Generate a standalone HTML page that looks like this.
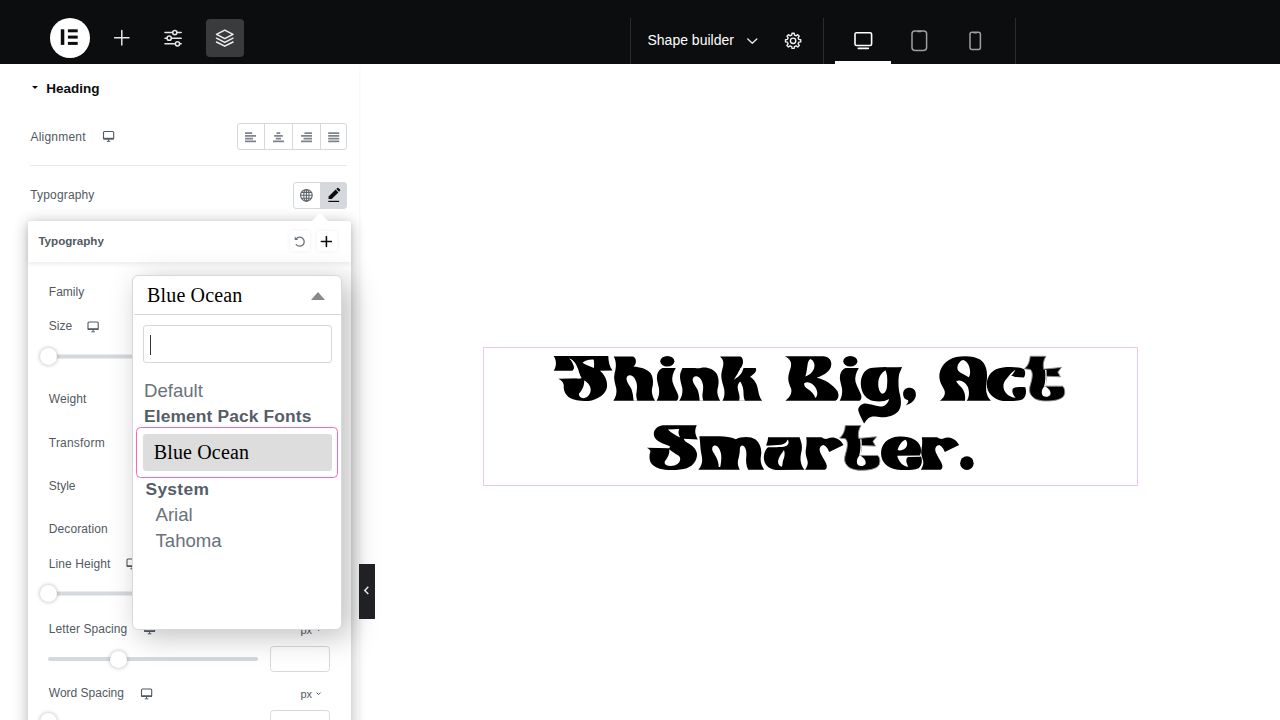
<!DOCTYPE html>
<html><head><meta charset="utf-8">
<style>
*{box-sizing:border-box;margin:0;padding:0}
html,body{width:1280px;height:720px;overflow:hidden;background:#fff;font-family:"Liberation Sans",sans-serif;}
.abs{position:absolute}
#top{left:0;top:0;width:1280px;height:64px;background:#0c0d0e}
.lbl{position:absolute;font-size:12px;color:#515962;line-height:14px;white-space:nowrap}
#panel{left:0;top:64px;width:359px;height:656px;background:#fff;box-shadow:0 0 4px rgba(0,0,0,.05)}
.vsep{position:absolute;top:18px;width:1px;height:46px;background:#2a2c2f}
.knob{position:absolute;width:17px;height:17px;border-radius:50%;background:#fff;box-shadow:0 0 4px rgba(0,0,0,.3)}
.dd{color:#69727d;line-height:22px;white-space:nowrap}
</style></head><body>
<!-- canvas -->
<div class="abs" id="canvas" style="left:359px;top:64px;width:921px;height:656px;background:#fff"></div>
<!-- heading widget -->
<div class="abs" style="left:483px;top:347px;width:655px;height:139px;border:1px solid #eec6ee"></div>
<svg class="abs" id="hsvg" style="left:484px;top:348px" width="654" height="137" viewBox="484 348 654 137"><g transform="translate(550.00,350.00) scale(0.08333)"><path d="M45,72 L700,72 C700,140 715,200 750,245 L600,248 C640,280 690,350 685,430 C680,510 620,570 500,605 C420,620 300,610 240,575 C180,540 160,480 165,420 C160,390 140,365 100,345 L370,340 C355,290 330,220 300,180 C290,215 285,235 268,250 L45,250 C75,200 85,140 45,72Z" fill="#000"/><path d="M390,153 C425,122 480,112 524,116 C532,150 530,185 527,215 C480,198 425,175 390,153Z" fill="#fff"/><path d="M410,365 C460,390 495,440 488,490 C480,545 440,580 395,578 C360,572 340,545 350,520 C375,490 415,440 410,365Z" fill="#fff"/><path d="M230,103 C286,118 318,172 338,232 C350,278 362,310 380,340 L326,343 C310,300 296,250 288,206 C280,166 260,130 230,103Z" fill="#fff"/></g><g transform="translate(605.00,350.00) scale(0.08333)"><path d="M105,78 L330,78 C365,85 375,120 370,150 C365,175 352,190 340,198 C420,205 500,225 545,275 C580,320 585,400 565,460 C555,510 575,570 600,608 L100,608 C130,570 145,520 135,460 C120,400 100,340 115,280 C135,220 140,140 105,78Z" fill="#000"/><path d="M300,303 C337,303 372,350 382,410 C388,450 380,500 375,530 C374,560 382,590 388,608 L343,608 C340,560 332,510 318,470 C300,430 262,390 258,350 C256,322 276,303 300,303Z" fill="#fff"/></g><g transform="translate(605.00,350.00) scale(0.08333)"><path d="M663,135 a85,62 0 1,0 170,0 a85,62 0 1,0 -170,0Z" fill="#000"/><path d="M690,215 L850,215 C815,270 800,330 810,380 C825,440 870,500 880,550 C885,580 875,600 860,608 L620,608 C645,570 655,520 648,460 C635,400 615,350 625,300 C635,255 660,228 690,215Z" fill="#000"/></g><g transform="translate(670.00,350.00) scale(0.08333)"><path d="M150,215 L300,215 C330,222 345,222 370,215 C440,200 520,225 560,285 C590,340 588,410 570,470 C560,520 580,570 602,608 L110,608 C140,570 155,520 148,460 C135,400 112,340 122,290 C130,255 140,235 150,215Z" fill="#000"/><path d="M315,316 C352,316 386,362 396,420 C402,458 394,505 389,535 C388,565 394,590 400,608 L356,608 C353,562 345,515 331,477 C314,438 276,400 272,362 C270,335 290,316 315,316Z" fill="#fff"/></g><g transform="translate(670.00,350.00) scale(0.08333)"><path d="M600,78 L840,78 C870,85 880,120 875,160 C865,200 840,240 815,280 C840,260 865,240 880,215 L1030,215 C1040,240 1030,265 1000,290 C985,305 970,315 960,322 C1010,350 1045,410 1055,470 C1062,520 1075,570 1105,608 L630,608 C655,565 658,520 650,470 C640,420 615,370 615,310 C615,250 645,200 640,150 C638,120 620,95 600,78Z" fill="#000"/><path d="M848,213 L882,213 C874,262 842,314 766,356 C800,305 830,255 848,213Z" fill="#fff"/><path d="M842,378 C820,400 805,430 815,475 C825,520 845,560 830,608 L900,608 C878,570 885,520 880,480 C875,440 860,405 842,378Z" fill="#fff"/></g><g transform="translate(775.00,345.00) scale(0.10417)"><path d="M95,108 L470,108 C520,115 545,150 540,195 C535,250 470,290 400,315 C480,330 560,385 600,445 C620,490 605,525 580,535 L100,535 C145,500 165,460 155,420 C140,380 120,340 130,290 C140,240 165,200 150,160 C140,135 120,120 95,108Z" fill="#000"/><path d="M340,134 C374,148 388,190 374,228 C358,268 326,290 292,302 C306,252 308,212 314,180 C318,158 328,142 340,134Z" fill="#fff"/><path d="M280,366 C320,346 364,368 390,410 C410,446 414,484 388,508 C374,472 350,444 318,424 C292,408 276,390 280,366Z" fill="#fff"/></g><g transform="translate(850.00,350.00) scale(0.10417)"><path d="M500,163 L472,230 C460,300 466,380 480,430 C496,500 492,560 460,592 C420,632 350,648 300,645 C260,642 230,632 200,642 C170,652 150,680 135,706 C120,670 92,625 80,582 C74,552 100,525 130,515 C170,505 230,535 290,542 C330,545 362,520 376,470 C340,492 280,500 230,490 C160,475 108,420 104,330 C100,250 140,185 200,172 C250,163 400,168 500,163Z" fill="#000"/><path d="M510,420 C510,380 540,360 575,362 C615,365 637,395 632,440 C626,482 590,516 535,532 C556,510 566,490 556,480 C525,476 510,450 510,420Z" fill="#000"/><path d="M340,195 C362,240 360,300 355,350 C350,400 325,425 305,418 C280,405 268,350 272,305 C278,255 305,215 340,195Z" fill="#fff"/></g><g transform="translate(930.00,345.00) scale(0.10417)"><path d="M95,535 C130,510 150,480 140,440 C125,400 95,370 90,310 C85,220 150,140 250,115 C330,100 430,105 480,140 C540,180 555,260 545,340 C535,420 530,475 585,535Z" fill="#000"/><path d="M320,145 C360,160 385,210 385,260 C385,285 380,300 372,310 C340,290 300,275 278,255 C255,230 260,190 285,165 C295,152 308,145 320,145Z" fill="#fff"/><path d="M252,346 C292,328 336,350 362,400 C384,452 374,512 350,537 L336,537 C344,482 326,432 298,404 C278,384 258,368 252,346Z" fill="#fff"/></g><g transform="translate(930.00,345.00) scale(0.10417)"><path d="M545,380 C545,290 600,225 700,215 C780,208 850,212 900,230 C918,250 918,290 900,312 L820,306 C800,300 785,298 772,296 C735,320 705,350 705,395 C705,440 740,480 780,497 C800,505 812,506 822,505 C790,475 785,440 795,420 C820,402 870,400 915,405 C930,450 920,500 890,520 C850,540 760,540 700,537 C610,525 545,460 545,380Z" fill="#000"/><path d="M820,238 C798,252 762,284 730,334 L774,300 C794,286 810,262 820,238Z" fill="#fff"/></g><g transform="translate(1000.00,345.00) scale(0.10417)"><path d="M290,108 L440,108 C415,150 410,200 420,232 L590,215 L555,260 L580,305 L445,300 C445,340 440,370 430,395 L600,395 C625,410 628,470 610,492 C580,527 520,537 440,537 C360,537 300,510 285,450 C275,400 310,350 310,290 C310,260 300,240 290,235 L235,228 C270,200 285,160 290,108Z" fill="#000" stroke="#8a8a8a" stroke-width="9"/><path d="M425,395 C455,400 490,440 485,470 C480,495 440,505 415,490 C395,470 395,430 425,395Z" fill="#fff"/><path d="M432,240 L446,240 C450,300 446,350 436,396 L424,396 C436,350 440,300 432,240Z" fill="#fff"/></g><g transform="translate(640.00,415.00) scale(0.10417)"><path d="M545,98 L220,98 C160,105 122,150 135,200 C145,250 220,275 290,302 L280,318 L65,315 C85,325 100,335 100,350 C88,380 88,420 100,450 C120,490 170,515 240,525 C320,532 400,525 450,510 C510,490 545,440 548,380 C545,330 500,290 450,265 C435,255 425,240 420,228 L555,235 C530,190 520,150 545,98Z" fill="#000"/><path d="M268,140 L376,135 C366,160 366,188 386,216 C345,198 300,175 268,140Z" fill="#fff"/><path d="M282,328 C300,345 335,368 368,388 C392,405 390,430 375,455 C350,485 300,495 260,485 C235,475 230,455 242,440 C265,410 285,375 282,328Z" fill="#fff"/></g><g transform="translate(690.00,415.00) scale(0.10417)"><path d="M90,205 L250,205 C300,200 380,205 440,232 C490,205 580,200 630,235 C680,280 692,340 680,400 C672,450 688,490 712,525 L80,525 C110,490 125,450 112,390 C97,330 100,260 90,205Z" fill="#000"/><path d="M232,293 C265,285 295,330 300,390 C303,430 296,470 290,500 L276,500 C275,440 250,400 225,360 C205,330 212,302 232,293Z" fill="#fff"/><path d="M505,292 C530,300 546,340 541,390 C536,440 536,480 560,527 L478,527 C465,500 455,470 460,440 C470,400 480,360 478,330 C478,305 490,290 505,292Z" fill="#fff"/></g><g transform="translate(755.00,415.00) scale(0.10417)"><path d="M125,213 L428,213 C440,250 458,290 448,340 C438,380 432,420 442,460 C450,490 462,510 476,525 L200,527 C130,520 85,470 85,410 C85,360 105,320 135,302 L106,290 C118,265 125,240 125,213Z" fill="#000"/><path d="M278,335 C290,360 285,400 272,430 C260,460 268,480 258,497 C235,495 218,470 222,440 C228,400 255,370 278,335Z" fill="#fff"/><path d="M85,298 L250,286 C285,278 305,260 314,234 C332,262 322,290 285,303 C250,312 160,309 100,310Z" fill="#fff"/></g><g transform="translate(755.00,415.00) scale(0.10417)"><path d="M492,213 L640,213 C660,228 680,235 700,225 C740,205 810,215 850,288 L712,355 C705,335 690,305 660,288 C635,290 620,310 620,335 C625,370 650,400 672,445 C690,480 700,510 672,525 L482,525 C500,500 512,470 504,440 C494,400 480,370 488,330 C496,290 498,250 492,213Z" fill="#000"/></g><g transform="translate(830.00,415.00) scale(0.10417)"><path d="M490,370 C490,280 550,215 660,207 C760,200 850,235 870,310 C878,345 872,375 862,388 L875,400 C890,440 880,490 850,510 C800,530 720,530 650,525 C550,515 490,450 490,370Z" fill="#000"/><path d="M722,238 C745,250 747,290 727,315 C705,337 670,347 650,337 C655,300 690,250 722,238Z" fill="#fff"/><path d="M645,390 L868,388 L870,400 L748,403 C727,420 727,450 752,496 C700,490 660,450 645,390Z" fill="#fff"/></g><g transform="translate(900.00,415.00) scale(0.10417)"><path d="M577,462 a65,65 0 1,0 130,0 a65,65 0 1,0 -130,0Z" fill="#000"/></g><g transform="translate(788.00,350.00) scale(0.08333)"><path d="M663,135 a85,62 0 1,0 170,0 a85,62 0 1,0 -170,0Z" fill="#000"/><path d="M690,215 L850,215 C815,270 800,330 810,380 C825,440 870,500 880,550 C885,580 875,600 860,608 L620,608 C645,570 655,520 648,460 C635,400 615,350 625,300 C635,255 660,228 690,215Z" fill="#000"/></g><g transform="translate(815.10,414.30) scale(0.10417)"><path d="M290,108 L440,108 C415,150 410,200 420,232 L590,215 L555,260 L580,305 L445,300 C445,340 440,370 430,395 L600,395 C625,410 628,470 610,492 C580,527 520,537 440,537 C360,537 300,510 285,450 C275,400 310,350 310,290 C310,260 300,240 290,235 L235,228 C270,200 285,160 290,108Z" fill="#000" stroke="#8a8a8a" stroke-width="9"/><path d="M425,395 C455,400 490,440 485,470 C480,495 440,505 415,490 C395,470 395,430 425,395Z" fill="#fff"/><path d="M432,240 L446,240 C450,300 446,350 436,396 L424,396 C436,350 440,300 432,240Z" fill="#fff"/></g><g transform="translate(870.60,415.00) scale(0.10417)"><path d="M492,213 L640,213 C660,228 680,235 700,225 C740,205 810,215 850,288 L712,355 C705,335 690,305 660,288 C635,290 620,310 620,335 C625,370 650,400 672,445 C690,480 700,510 672,525 L482,525 C500,500 512,470 504,440 C494,400 480,370 488,330 C496,290 498,250 492,213Z" fill="#000"/></g></svg>

<!-- left panel -->
<div class="abs" id="panel"></div>
<div class="abs" style="left:31.9px;top:85.7px;width:0;height:0;border-left:3.4px solid transparent;border-right:3.4px solid transparent;border-top:3.5px solid #0c0d0e"></div>
<div class="lbl" style="left:46.3px;top:81.5px;font-weight:bold;font-size:13.5px;color:#0c0d0e">Heading</div>
<div class="lbl" style="left:30.5px;top:130.1px;letter-spacing:.2px">Alignment</div>
<div class="abs" style="left:237px;top:123px;width:110px;height:27px;border:1px solid #d5d8dc;border-radius:3px"></div>
<div class="abs" style="left:30px;top:165px;width:317px;height:1px;background:#e6e8ea"></div>
<div class="lbl" style="left:30.3px;top:188.3px;letter-spacing:.15px">Typography</div>
<div class="abs" style="left:293px;top:182px;width:54px;height:27px;border:1px solid #d5d8dc;border-radius:3px;background:linear-gradient(90deg,#fff 0 26px,#d5d8dc 26px)"></div>

<svg class="abs" style="left:0;top:64px" width="360" height="656" viewBox="0 64 360 656"><g stroke="#515962" fill="none"><rect x="103.5" y="131.5" width="10.2" height="7.4" rx="1" stroke-width="1.1"/><path d="M103.3 138.6H113.9" stroke-width="1.6"/><path d="M108.6 139.4V141M106.8 141.3H110.4" stroke-width="1"/></g><path d="M264.5 123.5V150M292.5 123.5V150M320.5 123.5V150" stroke="#d5d8dc" stroke-width="1"/><path d="M245.0 133.2H252.2M245.0 135.9H256.0M245.0 138.6H253.0M245.0 141.3H256.0" stroke="#7d848c" stroke-width="1.8" fill="none"/><path d="M276.5 133.2H280.3M274.1 135.9H282.8M275.8 138.6H281.1M273.0 141.3H284.0" stroke="#7d848c" stroke-width="1.8" fill="none"/><path d="M304.5 133.2H312.0M301.0 135.9H312.0M303.5 138.6H312.0M301.0 141.3H312.0" stroke="#7d848c" stroke-width="1.8" fill="none"/><path d="M328.2 133.2H339.2M328.2 135.9H339.2M328.2 138.6H339.2M328.2 141.3H339.2" stroke="#7d848c" stroke-width="1.8" fill="none"/><g stroke="#5d646c" stroke-width="1.1" fill="none"><circle cx="306.4" cy="195.3" r="5.8"/><ellipse cx="306.4" cy="195.3" rx="2.6" ry="5.8"/><path d="M300.6 195.3H312.2M301.4 192.4H311.4M301.4 198.2H311.4M306.4 189.5V201.1"/></g><g fill="#0c0d0e"><path d="M328.4 199.1L328.9 196.3L335.6 189.6L338.4 192.4L331.7 199.1Z"/><path d="M336.3 188.9L337.2 188Q337.8 187.5 338.4 188L340 189.6Q340.5 190.2 340 190.8L339.1 191.7Z"/><rect x="328.3" y="200.8" width="10.8" height="1.2"/></g></svg>
<!-- popover -->
<div class="abs" id="pop" style="left:27.5px;top:221px;width:323.5px;height:520px;background:#fff;border-radius:3px;box-shadow:0 2px 15px rgba(0,0,0,.30)"></div>
<div class="abs" style="left:27.5px;top:221px;width:323.5px;height:41px;background:#fff;border-radius:3px 3px 0 0;box-shadow:0 2px 5px rgba(0,0,0,.08)"></div>
<div class="lbl" style="left:38.4px;top:233.9px;font-weight:bold;font-size:11.6px;color:#515962">Typography</div>

<div class="lbl" style="left:48.8px;top:284.6px">Family</div>
<div class="lbl" style="left:48.8px;top:319.1px">Size</div>
<div class="lbl" style="left:48.8px;top:392.3px;letter-spacing:.07px">Weight</div>
<div class="lbl" style="left:48.8px;top:435.5px;letter-spacing:.2px">Transform</div>
<div class="lbl" style="left:48.8px;top:478.6px">Style</div>
<div class="lbl" style="left:48.8px;top:521.8px;letter-spacing:.1px">Decoration</div>
<div class="lbl" style="left:48.8px;top:556.5px;letter-spacing:.08px">Line Height</div>
<div class="lbl" style="left:48.8px;top:621.7px;letter-spacing:.08px">Letter Spacing</div>
<div class="lbl" style="left:48.8px;top:686.4px">Word Spacing</div>


<!-- popover controls -->
<div class="abs" style="left:289.6px;top:231.2px;width:20.4px;height:19.6px;border-radius:3px;background:#fff;box-shadow:0 0 5px rgba(0,0,0,.07)"></div>
<div class="abs" style="left:316.8px;top:231.2px;width:20.2px;height:19.6px;border-radius:3px;background:#fff;box-shadow:0 0 5px rgba(0,0,0,.07)"></div>
<svg class="abs" style="left:0;top:64px" width="360" height="656" viewBox="0 64 360 656">
 <path d="M311.5 221.5L320 212.6L328.5 221.5Z" fill="#fff"/>
 <path d="M296.25 238.8A4.5 4.5 0 1 1 296.25 244.6" stroke="#69727d" stroke-width="1.3" fill="none" stroke-linecap="round"/>
 <path d="M294.7 236.6V240.1H298.2Z" fill="#69727d"/>
 <path d="M321.4 241.5H331.4M326.4 236.5V246.5" stroke="#0c0d0e" stroke-width="1.6" fill="none" stroke-linecap="round"/>
 <g stroke="#515962" fill="none"><rect x="88.0" y="322.0" width="10.2" height="7.4" rx="1" stroke-width="1.1"/><path d="M87.8 329.1H98.4" stroke-width="1.6"/><path d="M93.1 329.9V331.5M91.3 331.8H94.9" stroke-width="1"/></g><g stroke="#515962" fill="none"><rect x="127.0" y="559.0" width="10.2" height="7.4" rx="1" stroke-width="1.1"/><path d="M126.8 566.1H137.4" stroke-width="1.6"/><path d="M132.1 566.9V568.5M130.3 568.8H133.9" stroke-width="1"/></g><g stroke="#515962" fill="none"><rect x="144.5" y="624.0" width="10.2" height="7.4" rx="1" stroke-width="1.1"/><path d="M144.3 631.1H154.9" stroke-width="1.6"/><path d="M149.6 631.9V633.5M147.8 633.8H151.4" stroke-width="1"/></g><g stroke="#515962" fill="none"><rect x="141.5" y="689.0" width="10.2" height="7.4" rx="1" stroke-width="1.1"/><path d="M141.3 696.1H151.9" stroke-width="1.6"/><path d="M146.6 696.9V698.5M144.8 698.8H148.4" stroke-width="1"/></g>
 <!-- sliders -->
 <g stroke="#d5d8dc" stroke-width="4" stroke-linecap="round"><path d="M50 356.5H140"/><path d="M50 593.5H140"/><path d="M50 659H256"/><path d="M50 724H256"/></g>
 <g fill="none" stroke="#d5d8dc" stroke-width="1"><rect x="270.5" y="646.5" width="59" height="25" rx="3"/><rect x="270.5" y="710.5" width="59" height="25" rx="3"/></g>
 <path d="M316.6 692.6L318.6 694.6L320.6 692.6" stroke="#515962" stroke-width="1" fill="none"/>
 <path d="M316.6 628.6L318.6 630.6L320.6 628.6" stroke="#515962" stroke-width="1" fill="none"/>
</svg>
<div class="knob" style="left:39.5px;top:348px"></div>
<div class="knob" style="left:39.5px;top:585px"></div>
<div class="knob" style="left:109.5px;top:650.5px"></div>
<div class="knob" style="left:39.5px;top:712.5px"></div>
<div class="lbl" style="left:300.5px;top:687px;font-size:11px">px</div>
<div class="lbl" style="left:300.5px;top:623px;font-size:11px">px</div>

<!-- dropdown -->
<div class="abs" id="dd" style="left:132px;top:275px;width:210px;height:354.5px;background:#fff;border:1px solid #d5d8dc;border-radius:6px;box-shadow:8px 6px 30px rgba(0,0,0,.26)"></div>


<div class="abs" style="left:133.5px;top:313.5px;width:207.5px;height:1px;background:#d5d8dc"></div>
<div class="abs" style="left:147px;top:282.5px;font-family:'Liberation Serif',serif;font-size:20px;line-height:24px;color:#000;letter-spacing:.16px;white-space:nowrap">Blue Ocean</div>
<div class="abs" style="left:311.2px;top:292px;width:0;height:0;border-left:7px solid transparent;border-right:7px solid transparent;border-bottom:8.8px solid #888"></div>
<div class="abs" style="left:143px;top:325px;width:189px;height:37.5px;border:1px solid #d5d8dc;border-radius:3px"></div>
<div class="abs" style="left:150px;top:334.5px;width:1px;height:20.5px;background:#333"></div>
<div class="abs dd" style="left:144px;top:380px;font-size:18.6px">Default</div>
<div class="abs dd" style="left:144px;top:405px;font-size:17.4px;font-weight:bold;color:#565d68;letter-spacing:.12px">Element Pack Fonts</div>
<div class="abs" style="left:136.1px;top:426.7px;width:201.9px;height:50.9px;border:1.25px solid #ff67b5;border-radius:4.5px"></div>
<div class="abs" style="left:143.3px;top:434px;width:188.5px;height:36.5px;background:#dddddd;border-radius:3px"></div>
<div class="abs" style="left:153.7px;top:439.5px;font-family:'Liberation Serif',serif;font-size:20px;line-height:24px;color:#000;letter-spacing:.16px;white-space:nowrap">Blue Ocean</div>
<div class="abs dd" style="left:145.5px;top:478px;font-size:17.4px;font-weight:bold;color:#565d68;letter-spacing:.3px">System</div>
<div class="abs dd" style="left:155.5px;top:504px;font-size:18.6px">Arial</div>
<div class="abs dd" style="left:155.5px;top:529.5px;font-size:18.6px">Tahoma</div>

<!-- top bar -->
<div class="abs" id="top"></div>
<div class="abs" style="left:50px;top:18px;width:40px;height:40px;border-radius:50%;background:#fff"></div>
<div class="abs" style="left:206px;top:19px;width:38px;height:38px;border-radius:4px;background:#3a3b3d"></div>
<div class="abs" style="left:647.5px;top:31px;font-size:14px;line-height:18px;color:#fff">Shape builder</div>
<div class="abs" style="left:835px;top:61px;width:56px;height:3px;background:#fff"></div>

<svg class="abs" style="left:0;top:0" width="1280" height="64" viewBox="0 0 1280 64">
 <g fill="#0c0d0e"><rect x="60.8" y="29.3" width="3.5" height="15.6"/><rect x="67.9" y="29.3" width="9.8" height="3"/><rect x="67.9" y="35.6" width="9.8" height="3"/><rect x="67.9" y="41.9" width="9.8" height="3"/></g>
 <g stroke="#e6e6e6" stroke-width="1.5" fill="none" stroke-linecap="round">
  <path d="M114.6 37.8H129M121.8 30.5V45"/>
  <path d="M165 32.6H172.4M177.2 32.6H181.2M165 38.2H166.8M171.6 38.2H181.2M165 43.8H175.1M179.9 43.8H181.2"/>
  <circle cx="174.8" cy="32.6" r="2.1"/><circle cx="169.2" cy="38.2" r="2.1"/><circle cx="177.5" cy="43.8" r="2.1"/>
 </g>
 <g stroke="#f0f0f0" stroke-width="1.5" fill="none" stroke-linejoin="round" stroke-linecap="round">
  <path d="M224.75 30.2L233 34.4L224.75 38.6L216.5 34.4Z"/>
  <path d="M216.5 38.2L224.75 42.4L233 38.2"/>
  <path d="M216.5 42L224.75 46.2L233 42"/>
 </g>
 <path d="M747.8 39L752.3 43.3L756.8 39" stroke="#e6e6e6" stroke-width="1.4" fill="none" stroke-linecap="round" stroke-linejoin="round"/>
 <g stroke="#f0f0f0" stroke-width="1.4" fill="none" stroke-linejoin="round">
  <circle cx="793.1" cy="40.8" r="2.7"/>
  <path d="M798.84 39.42L800.72 39.72L800.72 41.88L798.84 42.18L798.13 43.88L799.26 45.42L797.72 46.96L796.18 45.83L794.48 46.54L794.18 48.42L792.02 48.42L791.72 46.54L790.02 45.83L788.48 46.96L786.94 45.42L788.07 43.88L787.36 42.18L785.48 41.88L785.48 39.72L787.36 39.42L788.07 37.72L786.94 36.18L788.48 34.64L790.02 35.77L791.72 35.06L792.02 33.18L794.18 33.18L794.48 35.06L796.18 35.77L797.72 34.64L799.26 36.18L798.13 37.72Z"/>
 </g>
 <g stroke="#fff" stroke-width="1.6" fill="none" stroke-linecap="round">
  <rect x="855" y="32.7" width="16.6" height="12.8" rx="1.6"/>
  <path d="M858.3 48.4H868.3"/>
 </g>
 <g stroke="#9da0a4" stroke-width="1.5" fill="none" stroke-linecap="round">
  <rect x="912" y="31" width="14.6" height="19.4" rx="2.8"/><path d="M917.8 31.6H920.8"/>
  <rect x="970" y="32.2" width="10.4" height="17.2" rx="2"/><path d="M973.9 32.8H976.5"/>
 </g>
</svg>
<div class="vsep" style="left:630px"></div><div class="vsep" style="left:823px"></div><div class="vsep" style="left:1015px"></div>
<!-- collapse handle -->
<svg class="abs" style="left:359px;top:564px;z-index:3" width="16" height="55"><path d="M9.3 22.8L5.8 26.4L9.3 30" stroke="#e6e6e6" stroke-width="1.5" fill="none"/></svg>
<div class="abs" style="left:359px;top:564px;width:16px;height:55px;background:#1f2124"></div>
</body></html>
